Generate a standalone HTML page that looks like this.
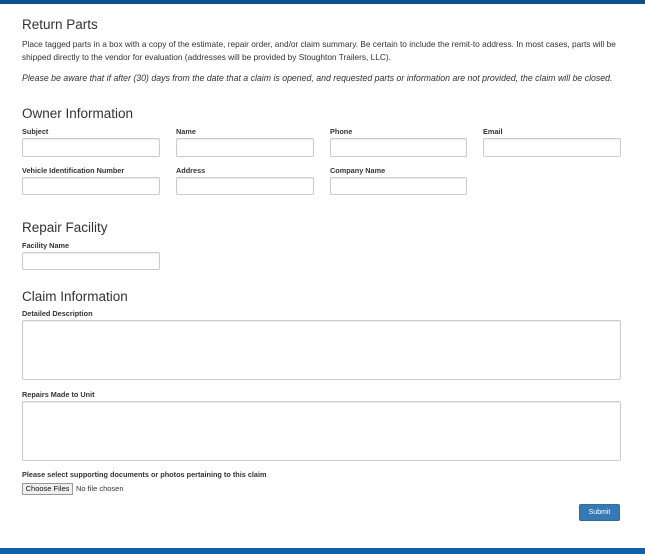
<!DOCTYPE html>
<html><head><style>
body{margin:0;width:645px;height:554px;background:#fff;position:relative;overflow:hidden;font-family:"Liberation Sans",sans-serif;color:#222}
.a{position:absolute;white-space:nowrap}
.bar{position:absolute;left:0;width:645px;background:#0b63ad}
h{position:absolute;font-size:13.5px;color:#333;white-space:nowrap}
p{margin:0;position:absolute;font-size:8.3px;color:#333;white-space:nowrap;left:22px}
.l{position:absolute;font-size:7.3px;font-weight:bold;color:#333;white-space:nowrap}
.i{position:absolute;border:1px solid #ccc;border-radius:2px;box-shadow:inset 0 1px 1px rgba(0,0,0,.08);box-sizing:border-box;background:#fff}
</style></head><body>
<div class="bar" style="top:0;height:4px;background:#0a4f93"></div>
<h style="left:22px;top:17px">Return Parts</h>
<p style="top:39px">Place tagged parts in a box with a copy of the estimate, repair order, and/or claim summary. Be certain to include the remit-to address. In most cases, parts will be</p>
<p style="top:52px">shipped directly to the vendor for evaluation (addresses will be provided by Stoughton Trailers, LLC).</p>
<p style="top:73px;font-style:italic;font-size:8.75px">Please be aware that if after (30) days from the date that a claim is opened, and requested parts or information are not provided, the claim will be closed.</p>
<h style="left:22px;top:106px">Owner Information</h>
<div class="l" style="left:22px;top:127px">Subject</div>
<div class="l" style="left:176px;top:127px">Name</div>
<div class="l" style="left:330px;top:127px">Phone</div>
<div class="l" style="left:483px;top:127px">Email</div>
<div class="i" style="left:22px;top:138px;width:138px;height:19px"></div>
<div class="i" style="left:176px;top:138px;width:138px;height:19px"></div>
<div class="i" style="left:330px;top:138px;width:137px;height:19px"></div>
<div class="i" style="left:483px;top:138px;width:138px;height:19px"></div>
<div class="l" style="left:22px;top:166px">Vehicle Identification Number</div>
<div class="l" style="left:176px;top:166px">Address</div>
<div class="l" style="left:330px;top:166px">Company Name</div>
<div class="i" style="left:22px;top:177px;width:138px;height:18px"></div>
<div class="i" style="left:176px;top:177px;width:138px;height:18px"></div>
<div class="i" style="left:330px;top:177px;width:137px;height:18px"></div>
<h style="left:22px;top:220px">Repair Facility</h>
<div class="l" style="left:22px;top:241px">Facility Name</div>
<div class="i" style="left:22px;top:252px;width:138px;height:18px"></div>
<h style="left:22px;top:289px">Claim Information</h>
<div class="l" style="left:22px;top:309px">Detailed Description</div>
<div class="i" style="left:22px;top:320px;width:599px;height:60px"></div>
<div class="l" style="left:22px;top:390px">Repairs Made to Unit</div>
<div class="i" style="left:22px;top:401px;width:599px;height:60px"></div>
<div class="l" style="left:22px;top:470px">Please select supporting documents or photos pertaining to this claim</div>
<div class="a" style="left:22px;top:483px;width:51px;height:12px;border:1px solid #999;background:#efefef;box-sizing:border-box;font-size:7.5px;text-align:center;line-height:10px;color:#111">Choose Files</div>
<div class="a" style="left:76px;top:484px;font-size:7.5px;color:#333">No file chosen</div>
<div class="a" style="left:579px;top:504px;width:41px;height:17px;background:#337ab7;border:1px solid #2e6da4;border-radius:2px;box-sizing:border-box;color:#fff;font-size:7px;text-align:center;line-height:15px">Submit</div>
<div class="bar" style="top:548px;height:6px"></div>
</body></html>
